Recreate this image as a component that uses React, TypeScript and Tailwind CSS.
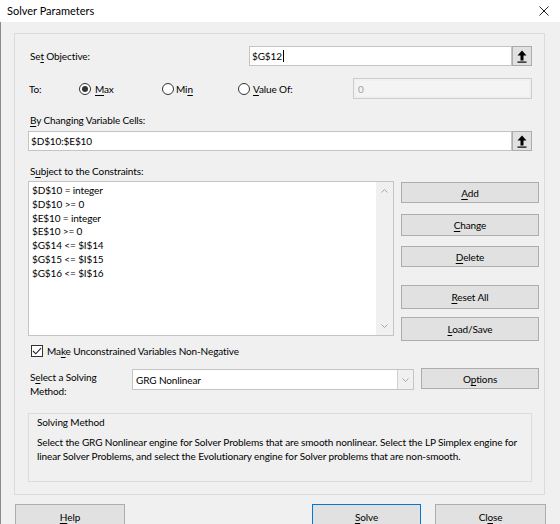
import React from 'react';

// Excel "Solver Parameters" dialog

const CONSTRAINTS = [
  '$D$10 = integer',
  '$D$10 >= 0',
  '$E$10 = integer',
  '$E$10 >= 0',
  '$G$14 <= $I$14',
  '$G$15 <= $I$15',
  '$G$16 <= $I$16',
];

function U({ children }: { children: React.ReactNode }) {
  return <span className="underline decoration-1 underline-offset-[2px]">{children}</span>;
}

function RefButton() {
  return (
    <div className="flex h-full w-[20px] shrink-0 items-center justify-center border border-[#adadad] bg-[#e1e1e1]">
      <svg width="10" height="13" viewBox="0 0 10 13">
        <path d="M5 0.5 L9.5 5.5 H6.5 V10.5 H3.5 V5.5 H0.5 Z" fill="#000" />
        <rect x="0.5" y="11.5" width="9" height="1.2" fill="#000" />
      </svg>
    </div>
  );
}

function Btn({ children, className }: { children: React.ReactNode; className: string }) {
  return (
    <div className={'flex shrink-0 items-center justify-center border border-[#adadad] bg-[#e1e1e1] ' + className}>
      {children}
    </div>
  );
}

function Radio({ checked }: { checked?: boolean }) {
  return (
    <span className="flex h-[12px] w-[12px] shrink-0 items-center justify-center rounded-full border border-[#333333] bg-white">
      {checked && <span className="h-[6px] w-[6px] rounded-full bg-[#333333]" />}
    </span>
  );
}

function Chevron({ up }: { up?: boolean }) {
  return (
    <svg width="7" height="4" viewBox="0 0 7 4">
      <path d={up ? 'M0.5 3.5 L3.5 0.5 L6.5 3.5' : 'M0.5 0.5 L3.5 3.5 L6.5 0.5'} fill="none" stroke="#a6a6a6" strokeWidth="1" />
    </svg>
  );
}

export default function App() {
  return (
    <div className="h-[524px] w-[560px] overflow-hidden bg-[#f0f0f0] font-['Lato','Segoe_UI',sans-serif] text-[10px] leading-[14px] tracking-[-0.12px] text-black">
      {/* Title bar */}
      <div className="flex h-[22px] items-center justify-between bg-white pl-[7px] pr-[11px] text-[11px] tracking-normal">
        <span>Solver Parameters</span>
        <svg width="10" height="10" viewBox="0 0 10 10">
          <path d="M0.5 0.5 L9.5 9.5 M9.5 0.5 L0.5 9.5" stroke="#222" strokeWidth="1" />
        </svg>
      </div>

      <div className="h-[502px] border-l border-[#8c8c8c] pl-[13px] pt-[11px]">
        {/* Main group */}
        <div className="h-[462px] w-[531px] border border-[#dcdcdc] pl-[13px] pt-[12px]">
          {/* Set objective */}
          <div className="flex h-[20px] items-center">
            <span className="w-[221px] pl-[2px]">
              Se<U>t</U> Objective:
            </span>
            <div className="flex h-full w-[263px] items-center border border-[#c4c4c4] bg-white pl-[2px]">
              <span>$G$12</span>
              <span className="ml-[1px] h-[12px] w-px bg-black" />
            </div>
            <RefButton />
          </div>

          {/* To: */}
          <div className="mt-[12px] flex h-[21px] items-center">
            <span className="w-[51px] pl-[1px]">To:</span>
            <div className="flex w-[83px] items-center gap-[4px]">
              <Radio checked />
              <span>
                <U>M</U>ax
              </span>
            </div>
            <div className="flex w-[76px] items-center gap-[2px]">
              <Radio />
              <span>
                Mi<U>n</U>
              </span>
            </div>
            <div className="flex w-[115px] items-center gap-[3px]">
              <Radio />
              <span>
                <U>V</U>alue Of:
              </span>
            </div>
            <div className="flex h-full w-[179px] items-center border border-[#cccccc] bg-[#f0f0f0] p-[2px]">
              <div className="flex h-full w-full items-center bg-[#f4f4f4] pl-[2px] text-[#a0a0a0]">0</div>
            </div>
          </div>

          {/* Variable cells */}
          <div className="mt-[14px] flex h-[14px] items-center pl-[2px]">
            <span>
              <U>B</U>y Changing Variable Cells:
            </span>
          </div>
          <div className="mt-[4px] flex h-[20px]">
            <div className="flex h-full w-[484px] items-center border border-[#c4c4c4] bg-white pl-[2px]">$D$10:$E$10</div>
            <RefButton />
          </div>

          {/* Constraints */}
          <div className="mt-[13px] flex h-[14px] items-center pl-[2px]">
            <span>
              S<U>u</U>bject to the Constraints:
            </span>
          </div>
          <div className="mt-[3px] flex h-[155px] items-start">
            <div className="flex h-[155px] w-[366px] border border-[#c4c4c4] bg-white">
              <div className="flex-1 pl-[3px] pt-[2px] leading-[13.8px]">
                {CONSTRAINTS.map((c) => (
                  <div key={c} className="whitespace-pre">
                    {c}
                  </div>
                ))}
              </div>
              <div className="flex w-[17px] flex-col items-center justify-between bg-[#f0f0f0] py-[7px]">
                <Chevron up />
                <Chevron />
              </div>
            </div>
            <div className="ml-[7px] flex w-[138px] flex-col">
              <Btn className="mt-[1px] h-[21px] w-full">
                <span>
                  <U>A</U>dd
                </span>
              </Btn>
              <Btn className="mt-[11px] h-[22px] w-full">
                <span>
                  <U>C</U>hange
                </span>
              </Btn>
              <Btn className="mt-[10px] h-[21px] w-full">
                <span>
                  <U>D</U>elete
                </span>
              </Btn>
              <Btn className="mt-[18px] h-[24px] w-full">
                <span>
                  <U>R</U>eset All
                </span>
              </Btn>
              <Btn className="mt-[8px] h-[24px] w-full">
                <span>
                  <U>L</U>oad/Save
                </span>
              </Btn>
            </div>
          </div>

          {/* Non-negative checkbox */}
          <div className="mt-[8px] flex h-[14px] items-center pl-[3px]">
            <span className="flex h-[12px] w-[12px] items-center justify-center border border-[#333333] bg-white">
              <svg width="10" height="8" viewBox="0 0 10 8">
                <path d="M1 4 L3.8 6.8 L9 1.2" fill="none" stroke="#222" strokeWidth="1.1" />
              </svg>
            </span>
            <span className="ml-[4px]">
              Ma<U>k</U>e Unconstrained Variables Non-Negative
            </span>
          </div>

          {/* Solving method select */}
          <div className="mt-[10px] flex items-start">
            <div className="w-[104px] pl-[2px] pt-[2px]">
              <div>
                S<U>e</U>lect a Solving
              </div>
              <div>Method:</div>
            </div>
            <div className="mt-[1px] flex h-[21px] w-[282px] border border-[#c4c4c4] bg-white">
              <div className="flex flex-1 items-center pl-[3px]">GRG Nonlinear</div>
              <div className="flex w-[16px] items-center justify-center border-l border-[#d0d0d0] bg-[#f0f0f0]">
                <Chevron />
              </div>
            </div>
            <Btn className="ml-[7px] h-[21px] w-[118px]">
              <span>
                O<U>p</U>tions
              </span>
            </Btn>
          </div>

          {/* Description group */}
          <div className="mt-[15px] h-[69px] w-[504px] border border-[#dcdcdc] pl-[8px] pt-[1px]">
            <div>Solving Method</div>
            <div className="mt-[6px] whitespace-nowrap">
              Select the GRG Nonlinear engine for Solver Problems that are smooth nonlinear. Select the LP Simplex engine for
            </div>
            <div className="whitespace-nowrap">
              linear Solver Problems, and select the Evolutionary engine for Solver problems that are non-smooth.
            </div>
          </div>
        </div>

        {/* Bottom buttons */}
        <div className="mt-[9px] flex">
          <Btn className="ml-[1px] h-[26px] w-[110px]">
            <span>
              <U>H</U>elp
            </span>
          </Btn>
          <div className="ml-[187px] flex h-[26px] w-[109px] shrink-0 items-center justify-center border border-[#0078d7] bg-[#e1e1e1]">
            <span>
              <U>S</U>olve
            </span>
          </div>
          <Btn className="ml-[14px] h-[26px] w-[111px]">
            <span>
              Cl<U>o</U>se
            </span>
          </Btn>
        </div>
      </div>
    </div>
  );
}
